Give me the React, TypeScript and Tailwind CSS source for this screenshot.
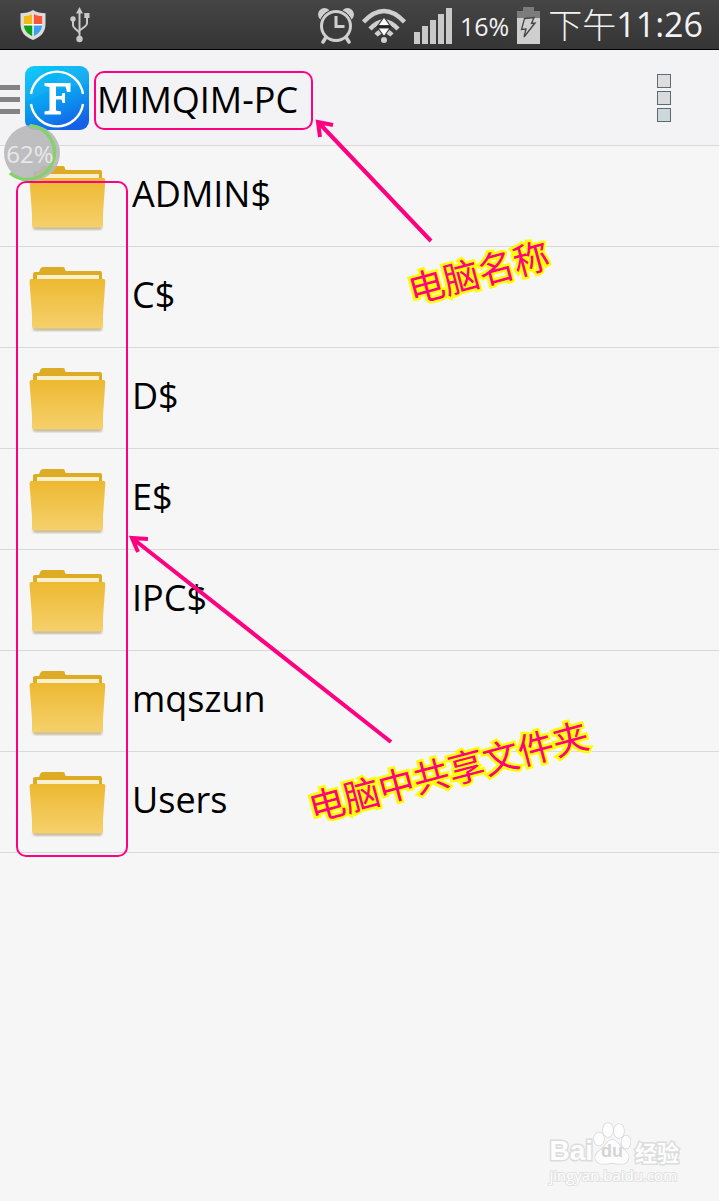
import React from "react";

const folders = ["ADMIN$", "C$", "D$", "E$", "IPC$", "mqszun", "Users"];

function ShieldIcon() {
  return (
    <svg width="26" height="30" viewBox="0 0 26 30" aria-hidden="true">
      <defs>
        <clipPath id="shield">
          <path d="M13 3.5 C10 5.5 7 6 3.8 6 V14 C3.8 20 7 24 13 26.5 C19 24 22.2 20 22.2 14 V6 C19 6 16 5.5 13 3.5Z" />
        </clipPath>
      </defs>
      <path d="M13 0 C9.5 2.6 5 3.2 0.5 3.2 V14 C0.5 22 5 27 13 30 C21 27 25.5 22 25.5 14 V3.2 C21 3.2 16.5 2.6 13 0Z" fill="#dcdcdc" />
      <g clipPath="url(#shield)">
        <rect width="26" height="30" fill="#fff" />
        <rect width="12.3" height="14" fill="#f5b916" />
        <rect x="13.7" width="12.3" height="14" fill="#f8553a" />
        <rect y="15.5" width="12.3" height="15" fill="#12a012" />
        <rect x="13.7" y="15.5" width="12.3" height="15" fill="#39a0f5" />
      </g>
    </svg>
  );
}

function UsbIcon() {
  return (
    <svg width="20" height="36" viewBox="0 0 20 36" fill="none" stroke="#c9c9c9" strokeWidth="2" aria-hidden="true">
      <path d="M9.5 5 V32" />
      <path d="M3 12 V18 Q3 20 5 21.5 L9.5 25.5" />
      <path d="M17 9 V16 Q17 18 15 19.5 L9.5 23.5" />
      <g fill="#c9c9c9" stroke="none">
        <path d="M9.5 0 L13 6.5 H6Z" />
        <circle cx="3" cy="12" r="2.7" />
        <rect x="14.3" y="6" width="5.2" height="5" />
        <circle cx="9.5" cy="32" r="3.2" />
      </g>
    </svg>
  );
}

function AlarmIcon() {
  return (
    <svg width="36" height="36" viewBox="0 0 36 36" fill="none" stroke="#cfcfcf" strokeLinecap="round" aria-hidden="true">
      <circle cx="6.5" cy="6.5" r="6.5" fill="#cfcfcf" stroke="none" />
      <circle cx="29.500" cy="6.5" r="6.5" fill="#cfcfcf" stroke="none" />
      <circle cx="18" cy="18" r="16.5" fill="#3c3c3c" stroke="#3c3c3c" />
      <circle cx="18" cy="18" r="14.500" strokeWidth="3" />
      <path d="M18 8 V18.5 H26.5" strokeWidth="3" strokeLinecap="butt" />
      <path d="M7.5 30 L5 34 M28.5 30 L31 34" strokeWidth="3.5" />
    </svg>
  );
}

function WifiIcon() {
  return (
    <svg width="44" height="36" viewBox="0 0 44 36" fill="none" stroke="#cfcfcf" aria-hidden="true">
      <path d="M1.5 14 Q22 -8 42.5 14" strokeWidth="4.5" />
      <path d="M8 21 Q22 6 36 21" strokeWidth="4.5" />
      <path d="M14 27 Q22 19 30 27" strokeWidth="4.5" />
      <circle cx="22" cy="32" r="3" fill="#cfcfcf" stroke="none" />
      <path d="M22 9 L28 17.5 H16Z" fill="#fff" stroke="#3c3c3c" strokeWidth="1.2" />
      <path d="M22 28.5 L28 20 H16Z" fill="#fff" stroke="#3c3c3c" strokeWidth="1.2" />
      <path d="M14.5 18.8 H29.5" stroke="#222" strokeWidth="1.5" />
    </svg>
  );
}

function SignalIcon() {
  return (
    <svg width="38" height="36" viewBox="0 0 38 36" fill="#c9c9c9" aria-hidden="true">
      <rect x="0" y="24" width="6" height="12" />
      <rect x="8" y="18" width="6" height="18" />
      <rect x="16" y="12" width="6" height="24" />
      <rect x="24" y="6" width="6" height="30" />
      <rect x="32" y="0" width="6" height="36" />
    </svg>
  );
}

function BatteryIcon() {
  return (
    <svg width="23" height="37" viewBox="0 0 23 37" aria-hidden="true">
      <path d="M6 0 H17 V4 H23 V11 H0 V4 H6Z" fill="#7c7c7c" />
      <rect y="11" width="23" height="26" fill="#cfcfcf" />
      <path d="M7.5 11.5 L17 10.5 L14.5 16.5 L18 16 L7 30 L9 22 L4.5 22.5Z" fill="#cfcfcf" stroke="#444" strokeWidth="1.3" />
    </svg>
  );
}

function AppLogo() {
  return (
    <svg width="64" height="64" viewBox="0 0 64 64" aria-hidden="true">
      <defs>
        <linearGradient id="logo" x1="0.2" y1="0" x2="0.6" y2="1">
          <stop offset="0" stopColor="#08c6f8" />
          <stop offset="0.55" stopColor="#0a9cf0" />
          <stop offset="1" stopColor="#1560e6" />
        </linearGradient>
      </defs>
      <rect width="64" height="64" rx="9" fill="url(#logo)" />
      <path d="M14 0 L26 24 L0 36 V9 Q0 0 9 0Z" fill="#fff" opacity="0.04" />
      <path d="M40 0 L26 24 L64 18 V9 Q64 0 55 0Z" fill="#fff" opacity="0.05" />
      <g fill="none" stroke="#fff" strokeWidth="2.4">
        <path d="M6 28 A26.3 26.3 0 0 1 58 28" />
        <path d="M6 38 A26.3 26.3 0 0 0 58 38" />
      </g>
      <path
        d="M19.5 17 H45.5 V26 H42 L40.5 20.5 H31 V30 H36.5 L37.5 27 H40 V37 H37.5 L36.5 33.5 H31 V44.5 L36 45.5 V48.5 H19.5 V45.5 L24.5 44.5 V21 L19.5 20Z"
        fill="#fff"
      />
    </svg>
  );
}

function FolderIcon() {
  return (
    <svg width="78" height="68" viewBox="0 0 78 68" aria-hidden="true">
      <defs>
        <linearGradient id="folder" x1="0" y1="0" x2="0" y2="1">
          <stop offset="0" stopColor="#edb931" />
          <stop offset="1" stopColor="#f5d06c" />
        </linearGradient>
        <filter id="soft">
          <feGaussianBlur stdDeviation="1" />
        </filter>
      </defs>
      <path d="M5 61 H74 V64 Q74 66 71 66 H8 Q5 66 5 64Z" fill="#8a7440" opacity="0.45" filter="url(#soft)" />
      <path d="M5 20 V9 Q5 7 7 7 H11 L12.5 3.5 Q13 2 15 2 H35 Q37 2 37 5 L38 6 H72 Q74 6 74 8 V20Z" fill="#deab25" />
      <rect x="9" y="10" width="62" height="5" fill="#fbf0cd" />
      <path d="M3 14 H76 Q77.5 14 77.3 16.5 L75 50 V61 Q75 63.5 72 63.5 H7 Q4 63.5 4 61 V50 L1.5 16.5 Q1.5 14 3 14Z" fill="url(#folder)" />
    </svg>
  );
}

function StatusBar() {
  return (
    <div className="flex h-[50px] items-center justify-between border-b border-black bg-linear-to-b from-[#454545] to-[#353535] pl-5 pr-4 text-[#f2f2f2]">
      <div className="flex items-center gap-6">
        <ShieldIcon />
        <UsbIcon />
      </div>
      <div className="flex items-center gap-2 pt-0.5">
        <AlarmIcon />
        <WifiIcon />
        <SignalIcon />
        <span className="font-['Open_Sans',sans-serif] text-[25px] leading-8">16%</span>
        <BatteryIcon />
        <time className="flex items-center pb-1 font-medium leading-10">
          <span className="font-['Noto_Sans_CJK_SC',sans-serif] text-[34px] font-light">下午</span>
          <span className="font-['Open_Sans',sans-serif] text-[34px]">11:26</span>
        </time>
      </div>
    </div>
  );
}

function Header() {
  return (
    <header className="flex h-24 items-center border-b border-[#dcd8da] bg-[#f3f3f6]">
      <button aria-label="Menu" className="flex w-5 flex-col gap-[7px] pt-1">
        <span className="h-[5px] w-full bg-[#838386]" />
        <span className="h-[5px] w-full bg-[#838386]" />
        <span className="h-[5px] w-full bg-[#838386]" />
      </button>
      <div className="ml-[5px]">
        <AppLogo />
      </div>
      <h1 className="ml-2 pt-1 text-4xl font-medium">MIMQIM-PC</h1>
      <button aria-label="More options" className="ml-auto mr-12 flex flex-col gap-[3px]">
        <span className="size-3.5 border border-[#5d6975] bg-[#dedede]" />
        <span className="size-3.5 border border-[#5d6975] bg-[#d9dadb]" />
        <span className="size-3.5 border border-[#5d6975] bg-[#cdd8dc]" />
      </button>
    </header>
  );
}

function ProgressBubble() {
  return (
    <div className="absolute left-[3px] top-[123px] flex size-[58px] items-center justify-center">
      <svg className="absolute inset-0" width="58" height="60" viewBox="0 0 58 60" aria-hidden="true">
        <circle cx="29" cy="30" r="28" fill="#b8b8ba" opacity="0.9" />
        <path d="M27 2.500 A27 27 0 1 1 7 50" fill="none" stroke="#84d26c" strokeWidth="3.5" />
      </svg>
      <span className="relative pt-1 pr-1 text-2xl text-[#e8e8e8]">62%</span>
    </div>
  );
}

function Annotations() {
  return (
    <>
      <svg className="pointer-events-none absolute left-0 top-0" width="719" height="1201" viewBox="0 0 719 1201" fill="none" stroke="#ff0080" aria-hidden="true">
        <rect x="95" y="72" width="217" height="57" rx="9" strokeWidth="2" />
        <rect x="17" y="182" width="110" height="674" rx="9" strokeWidth="2" />
        <g strokeWidth="4">
          <path d="M431 241 L318 122 M333 125 L318 122 L320 137" />
          <path d="M391 742 L132 538 M148 539 L132 538 L138 552" />
        </g>
      </svg>
      <p className="absolute left-[406px] top-[244px] -rotate-15 whitespace-nowrap font-['Noto_Sans_CJK_SC',sans-serif] text-4xl leading-[52px] text-[#ff0080] [-webkit-text-stroke:5px_#ffff00] [paint-order:stroke_fill]">
        电脑名称
      </p>
      <p className="absolute left-[304px] top-[743px] -rotate-15 whitespace-nowrap font-['Noto_Sans_CJK_SC',sans-serif] text-4xl leading-[52px] text-[#ff0080] [-webkit-text-stroke:5px_#ffff00] [paint-order:stroke_fill]">
        电脑中共享文件夹
      </p>
    </>
  );
}

function Watermark() {
  return (
    <div className="absolute bottom-4 right-10 flex flex-col items-start text-[#fdfdfd] [-webkit-text-stroke:3px_#dcdcdc] [paint-order:stroke_fill]">
      <div className="flex items-end">
        <span className="font-['Liberation_Sans',sans-serif] text-[28px] font-bold leading-7">Bai</span>
        <div className="relative flex h-[43px] w-[38px] items-end justify-center">
          <svg className="absolute inset-0" width="38" height="43" viewBox="0 0 38 43" fill="#fdfdfd" stroke="#d8d8d8" strokeWidth="1.5" aria-hidden="true">
            <ellipse cx="6" cy="17" rx="5" ry="6.5" />
            <ellipse cx="15" cy="8" rx="5" ry="7" />
            <ellipse cx="26" cy="9" rx="5" ry="7" />
            <ellipse cx="33" cy="20" rx="4.5" ry="6.5" />
            <path d="M19 18 C24 18 26 23 30 27 C35 31 37 34 35 38 C33 43 27 42 19 41 C11 42 5 43 3 38 C1 34 4 30 9 27 C13 23 14 18 19 18Z" />
          </svg>
          <span className="relative pb-0.5 font-['Liberation_Sans',sans-serif] text-lg font-bold leading-6 text-[#d4d4d4] [-webkit-text-stroke:0px]">du</span>
        </div>
        <span className="ml-1 font-['Noto_Sans_CJK_SC',sans-serif] text-[22px] font-bold leading-7">经验</span>
      </div>
      <span className="font-['Open_Sans',sans-serif] text-[15px] leading-5 [-webkit-text-stroke:2px_#e2e2e2]">jingyan.baidu.com</span>
    </div>
  );
}

export default function App() {
  return (
    <div className="relative min-h-screen overflow-hidden bg-[#f6f6f6] font-['Open_Sans',sans-serif] text-black">
      <StatusBar />
      <Header />
      <ul>
        {folders.map((name) => (
          <li key={name} className="border-b border-[#d9d9d9]">
            <button className="flex h-[100px] w-full items-center gap-[26px] pl-7 text-left">
              <div className="pt-1">
                <FolderIcon />
              </div>
              <span className="pb-1 text-4xl font-medium">{name}</span>
            </button>
          </li>
        ))}
      </ul>
      <ProgressBubble />
      <Annotations />
      <Watermark />
    </div>
  );
}
